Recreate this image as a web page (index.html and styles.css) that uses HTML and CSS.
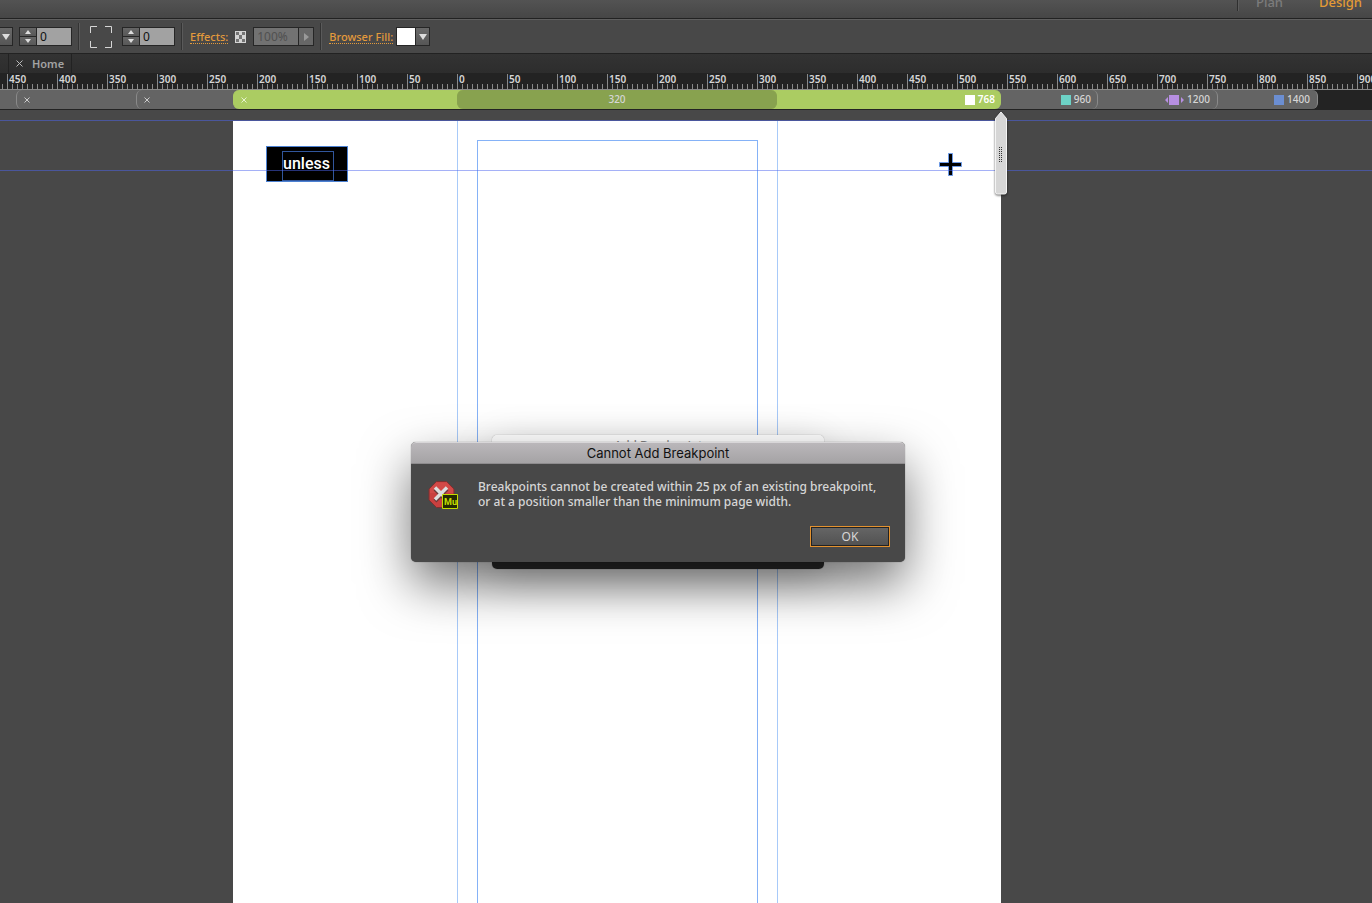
FILE: index.html
```html
<!DOCTYPE html>
<html lang="en">
<head>
<meta charset="utf-8">
<title>Home</title>
<link rel="stylesheet" href="styles.css">
</head>
<body>
<header class="modebar">
  <nav class="modes">
    <a class="mode" href="#plan">Plan</a>
    <a class="mode mode-active" href="#design">Design</a>
  </nav>
</header>

<div class="toolbar">
  <button class="dropper" aria-label="More options"><svg width="8" height="6"><path d="M0 0h8L4 6z" fill="#ddd"/></svg></button>
  <div class="stepper">
    <div class="spin">
      <button aria-label="Increase stroke"><svg width="6" height="4"><path d="M3 0L6 4H0z" fill="#ddd"/></svg></button>
      <button aria-label="Decrease stroke"><svg width="6" height="4"><path d="M0 0h6L3 4z" fill="#ddd"/></svg></button>
    </div>
    <input class="field" type="text" value="0" aria-label="Stroke">
  </div>
  <span class="sep"></span>
  <svg class="corners" width="22" height="22" fill="none" stroke="#d6d6d6" aria-hidden="true"><path d="M.5 7V.5H7M15 .5h6.500V7M21.500 15v6.500H15M7 21.500H.5V15"/></svg>
  <div class="stepper">
    <div class="spin">
      <button aria-label="Increase radius"><svg width="6" height="4"><path d="M3 0L6 4H0z" fill="#ddd"/></svg></button>
      <button aria-label="Decrease radius"><svg width="6" height="4"><path d="M0 0h6L3 4z" fill="#ddd"/></svg></button>
    </div>
    <input class="field" type="text" value="0" aria-label="Corner radius">
  </div>
  <span class="sep"></span>
  <div class="group">
    <a class="tool-link" href="#effects">Effects:</a>
    <svg class="checker" width="11" height="12" aria-hidden="true"><path fill="#d4d4d4" d="M0 0h11v12H0z"/><path fill="#747474" d="M1 1h3v3H1zM7 1h3v3H7zM4 4h3v4H4zM1 8h3v3H1zM7 8h3v3H7z"/></svg>
    <div class="opacity">
      <input class="field field-off" type="text" value="100%" aria-label="Opacity" disabled>
      <button class="dropper dropper-off" aria-label="Opacity slider" disabled><svg width="5" height="8"><path d="M0 0v8l5-4z" fill="#999"/></svg></button>
    </div>
  </div>
  <span class="sep"></span>
  <div class="fill">
    <a class="tool-link" href="#fill">Browser Fill:</a>
    <button class="swatch" aria-label="Fill color"></button>
    <button class="dropper" aria-label="Fill options"><svg width="8" height="6"><path d="M0 0h8L4 6z" fill="#ddd"/></svg></button>
  </div>
</div>

<div class="tabs">
  <div class="tab">
    <button class="close" aria-label="Close Home"><svg width="7" height="7" stroke="#bbb"><path d="M.5.5l6 6M6.500.5l-6 6"/></svg></button>
    <span>Home</span>
  </div>
</div>

<div class="ruler">
  <span>450</span><span>400</span><span>350</span><span>300</span><span>250</span><span>200</span><span>150</span><span>100</span><span>50</span><span>0</span><span>50</span><span>100</span><span>150</span><span>200</span><span>250</span><span>300</span><span>350</span><span>400</span><span>450</span><span>500</span><span>550</span><span>600</span><span>650</span><span>700</span><span>750</span><span>800</span><span>850</span><span>900</span>
</div>

<div class="breakpoints">
  <div class="bp bp-1400"><span class="chip blue"></span>1400</div>
  <div class="bp bp-1200">
    <button class="close" aria-label="Delete 1200"><svg width="6" height="6" stroke="#ccc"><path d="M.5.5l5 5M5.500.5l-5 5"/></svg></button>
    <span class="grow"></span>
    <svg class="marker" width="19" height="10"><path fill="#b78fe2" d="M4 0h10v10H4zM3 2v6L0 5zM16 2v6l3-3z"/></svg>1200
  </div>
  <div class="bp bp-960">
    <button class="close" aria-label="Delete 960"><svg width="6" height="6" stroke="#ccc"><path d="M.5.5l5 5M5.500.5l-5 5"/></svg></button>
    <span class="grow"></span>
    <span class="chip teal"></span>960
  </div>
  <div class="bp bp-768">
    <button class="close" aria-label="Delete 768"><svg width="6" height="6" stroke="#e6f2cd"><path d="M.5.5l5 5M5.500.5l-5 5"/></svg></button>
    <span class="grow"></span>
    <span class="chip white"></span>768
  </div>
  <div class="bp bp-320">320</div>
</div>

<main class="workspace">
  <div class="page">
    <div class="columns"><div class="margins"></div></div>
    <div class="logo"><div class="logo-text">unless</div></div>
    <svg class="plus" width="23" height="23"><path d="M9.500.5h4v9h9v4h-9v9h-4v-9h-9v-4h9z" fill="#000" stroke="#6d9be8"/></svg>
  </div>
  <div class="guide guide-top"></div>
  <div class="guide guide-header"></div>
  <svg class="scrubber" width="16" height="88">
    <path d="M2.500 8.500L8 2l5.500 6.500V82q0 2-2 2h-7q-2 0-2-2z" fill="#d6d6d6" stroke="#f4f4f4"/>
    <path d="M6.500 37v16M8.500 37v16" stroke="#333" stroke-dasharray="1 1"/>
  </svg>

  <section class="sheet" aria-hidden="true"><div class="sheet-title">Add Breakpoint</div></section>

  <section class="dialog" role="alertdialog" aria-labelledby="dlg-title" aria-describedby="dlg-text">
    <h1 class="dialog-title" id="dlg-title">Cannot Add Breakpoint</h1>
    <div class="dialog-body">
      <svg class="alert" width="30" height="31" aria-hidden="true">
        <g transform="translate(0 1)">
          <path d="M8.500 1.500h10l7.500 7.500v11l-7.500 7.500h-10L1 20V9z" fill="#c9403f" stroke="#7c3030"/>
          <path d="M8 2.500h11L25 9v4H2V9z" fill="#d95250" opacity=".5"/>
          <path d="M7 9l12 12M19 9L7 21" stroke="#6b3838" stroke-width="4"/>
          <path d="M7 7.500l12 12M19 7.500L7 19.500" stroke="#ddd" stroke-width="3.500"/>
          <path d="M14.500 14.500h15v14h-15z" fill="#252a00" stroke="#c4de00"/>
          <text x="16" y="25" class="mu">Mu</text>
        </g>
      </svg>
      <p class="dialog-text" id="dlg-text">Breakpoints cannot be created within 25 px of an existing breakpoint,<br>or at a position smaller than the minimum page width.</p>
    </div>
    <div class="dialog-actions"><button class="ok">OK</button></div>
  </section>
</main>
</body>
</html>
```
FILE: styles.css
```css
* { box-sizing: border-box; }
body {
  margin: 0;
  height: 100vh;
  display: flex;
  flex-direction: column;
  overflow: hidden;
  background: #484848;
  color: #d6d6d6;
  font-family: "Noto Sans", "Open Sans", sans-serif;
  font-size: 11px;
}
button, input { margin: 0; padding: 0; font: inherit; color: inherit; }
button { border: 0; background: none; display: flex; align-items: center; justify-content: center; }
svg { display: block; flex: none; }

.modebar {
  flex: none;
  height: 19px;
  display: flex;
  justify-content: flex-end;
  background: linear-gradient(#535353, #464646);
  border-bottom: 1px solid #222;
}
.modes {
  display: flex;
  gap: 36px;
  height: 11px;
  padding: 0 10px 0 18px;
  border-left: 1px solid #2f2f2f;
  box-shadow: inset 1px 0 #5c5c5c;
}
.mode {
  color: #7c7c7c;
  font-size: 13px;
  font-weight: 500;
  line-height: 18px;
  margin-top: -7px;
  text-decoration: none;
}
.mode-active { color: #e39a35; }

.toolbar {
  flex: none;
  height: 35px;
  display: flex;
  align-items: center;
  gap: 6px;
  background: #484848;
  border-top: 1px solid #5f5f5f;
  border-bottom: 1px solid #222;
}
.dropper {
  width: 15px;
  height: 19px;
  background: linear-gradient(#696969, #565656);
  border: 1px solid #262626;
}
.toolbar > .dropper { width: 13px; border-left: 0; }
.stepper { display: flex; height: 19px; }
.spin { width: 17px; border: 1px solid #262626; border-right: 0; display: flex; flex-direction: column; gap: 1px; background: #262626; }
.spin button { flex: 1; background: linear-gradient(#666, #585858); }
.field {
  width: 36px;
  padding: 0 3px;
  background: #a2a2a2;
  border: 1px solid #262626;
  border-radius: 0;
  color: #111;
  font-size: 12px;
}
.sep { width: 2px; height: 27px; background: #5a5a5a; border-left: 1px solid #333; }
.corners { margin: 0 4px; }
.tool-link {
  color: #e39a3c;
  line-height: 13px;
  font-weight: 500;
  text-decoration: none;
  border-bottom: 1px dotted #e39a3c;
}
.group { display: flex; align-items: center; gap: 7px; margin-left: 1px; }
.opacity { display: flex; height: 19px; }
.field-off { width: 45px; background: #727272; color: #505050; border-right: 0; }
.dropper-off { width: 16px; background: #676767; }
.fill { display: flex; align-items: center; margin-left: 1px; }
.swatch { width: 19px; height: 19px; margin-left: 3px; background: #fff; border: 1px solid #262626; border-right: 0; }

.tabs { flex: none; height: 19px; display: flex; padding-left: 8px; background: linear-gradient(#333, #2d2d2d); }
.tab {
  display: flex;
  align-items: center;
  gap: 9px;
  padding: 0 7px;
  color: #a3a3a3;
  font-weight: 600;
  border: 1px solid #222;
  border-width: 0 1px;
}

.ruler {
  flex: none;
  height: 17px;
  display: flex;
  overflow: hidden;
  padding-left: 7px;
  border-bottom: 1px solid #8a8a8a;
  background: repeating-linear-gradient(90deg, transparent 0 2px, #8a8a8a 2px 3px, transparent 3px 5px) 0 100% / 100% 5px no-repeat #232323;
}
.ruler span {
  flex: 0 0 50px;
  margin-top: 1px;
  padding-left: 1px;
  border-left: 1px solid #8a8a8a;
  font-size: 10px;
  font-weight: 600;
  line-height: 10px;
}

.breakpoints {
  flex: none;
  height: 20px;
  display: grid;
  grid-template-columns: 16px 120px 97px 224px 320px 224px 97px 120px 100px 1fr;
  grid-template-rows: 19px;
  background: #232323;
}
.bp {
  grid-row: 1;
  display: flex;
  align-items: center;
  justify-content: flex-end;
  padding: 0 7px;
  border: 1px solid #8a8a8a;
  border-width: 0 1px;
  border-radius: 6px;
  background: #646464;
  font-size: 10px;
  font-weight: 500;
  line-height: 13px;
}
.grow { flex: 1; }
.bp-1400 { grid-column: 1 / 10; border-left: 0; border-radius: 0 6px 6px 0; }
.bp-1200 { grid-column: 2 / 9; }
.bp-960 { grid-column: 3 / 8; padding-right: 6px; }
.bp-768 { grid-column: 4 / 7; padding-right: 5px; background: #abcc62; border-color: #abcc62; color: #fff; font-weight: 600; }
.bp-320 { grid-column: 5 / 6; justify-content: center; background: #88a24f; border-color: #88a24f; }
.chip { width: 10px; height: 10px; margin-right: 3px; }
.blue { background: #6b8ed2; }
.teal { background: #6dd2c6; }
.white { background: #fff; }
.marker { margin-right: 3px; }

.workspace { position: relative; flex: 1; min-height: 0; display: flex; padding: 11px 0 0 233px; overflow: hidden; }
.page { position: relative; flex: 0 0 768px; background: #fff; display: flex; justify-content: center; }
.columns { width: 321px; margin-left: 1px; padding: 19px 19px 0; border: 1px solid #a8caf9; border-width: 0 1px; }
.margins { height: 100%; border: 1px solid #85b2f7; border-bottom: 0; }
.logo {
  position: absolute;
  left: 33px;
  top: 25px;
  width: 82px;
  height: 36px;
  padding: 4px 13px 0 15px;
  background: #000;
  border: 1px solid #4c81d2;
}
.logo-text {
  width: 52px;
  height: 30px;
  border: 1px solid #31569c;
  color: #fff;
  font: 500 16px/24px Roboto, sans-serif;
}
.plus { position: absolute; left: 706px; top: 32px; }
.guide { position: absolute; left: 0; right: 0; height: 1px; background: rgba(75, 100, 240, 0.5); }
.guide-top { top: 10px; }
.guide-header { top: 60px; }
.scrubber { position: absolute; left: 993px; top: 0; filter: drop-shadow(0 1px 1px rgba(0, 0, 0, 0.6)); }

.sheet {
  position: absolute;
  left: 492px;
  top: 325px;
  width: 332px;
  height: 134px;
  overflow: hidden;
  border-radius: 5px;
  background: linear-gradient(#fff 21px, #2b2b2b 21px);
  box-shadow: 0 0 1px rgba(0, 0, 0, 0.5), 0 10px 40px rgba(0, 0, 0, 0.2);
}
.sheet-title { color: #888; font: 13px/22px Roboto, sans-serif; text-align: center; }

.dialog {
  position: absolute;
  left: 411px;
  top: 332px;
  width: 494px;
  border-radius: 5px;
  background: #484848;
  box-shadow: 0 0 1px rgba(0, 0, 0, 0.6), 0 22px 50px rgba(0, 0, 0, 0.55);
}
.dialog-title {
  margin: 0;
  height: 22px;
  border-radius: 5px 5px 0 0;
  border-top: 1px solid #d8d6d8;
  border-bottom: 1px solid #8e8c8e;
  background: linear-gradient(#bab7ba, #a5a3a5);
  color: #111;
  font: 13px/21px Inter, sans-serif;
  text-align: center;
}
.dialog-body { display: flex; gap: 20px; padding: 15px 17px 0; }
.dialog-text { margin: 0; font-size: 12px; font-weight: 500; line-height: 15px; white-space: nowrap; }
.mu { font: bold 9px Roboto, sans-serif; fill: #c4de00; }
.dialog-actions { display: flex; justify-content: flex-end; padding: 16px 15px 15px; }
.ok {
  width: 80px;
  height: 21px;
  border: 1px solid #e3922f;
  background: linear-gradient(#666, #515151);
  box-shadow: inset 0 0 0 1px #222;
  font-size: 12px;
}
```
